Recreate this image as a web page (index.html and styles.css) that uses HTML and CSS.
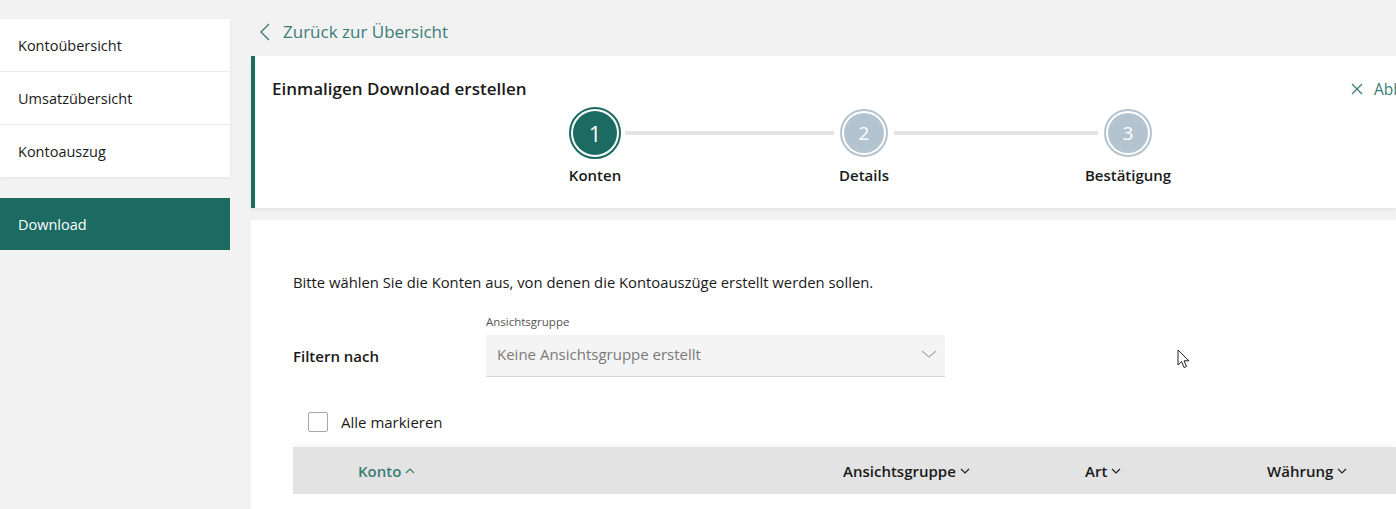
FILE: index.html
```html
<!DOCTYPE html>
<html lang="de">
<head>
    <meta charset="UTF-8">
    <meta name="viewport" content="width=device-width, initial-scale=1.0">
    <title>Download</title>
    <link rel="stylesheet" href="styles.css">
</head>
<body>

    <div class="page">
        <aside class="sidebar">
            <nav class="sidebar__menu">
                <a class="sidebar__item" href="#">Kontoübersicht</a>
                <a class="sidebar__item" href="#">Umsatzübersicht</a>
                <a class="sidebar__item" href="#">Kontoauszug</a>
            </nav>
            <a class="sidebar__active" href="#">Download</a>
        </aside>

        <main class="main">
            <a class="back" href="#">
                <svg class="back__icon" width="12" height="20" viewBox="0 0 12 20">
                    <path d="M10 2 L2 10 L10 18" fill="none" stroke="#3a7d76" stroke-width="1.4"/>
                </svg>
                Zurück zur Übersicht
            </a>

            <section class="head">
                <div class="head__top">
                    <h1 class="head__title">Einmaligen Download erstellen</h1>
                    <a class="head__cancel" href="#">
                        <svg width="12" height="12" viewBox="0 0 12 12">
                            <path d="M1 1 L11 11 M11 1 L1 11" fill="none" stroke="#3a7d76" stroke-width="1.3"/>
                        </svg>
                        Abbrechen
                    </a>
                </div>
                <div class="stepper">
                    <div class="step step--active"><span>1</span></div>
                    <div class="stepper__line"></div>
                    <div class="step"><span>2</span></div>
                    <div class="stepper__line"></div>
                    <div class="step"><span>3</span></div>
                    <p class="stepper__label">Konten</p>
                    <p></p>
                    <p class="stepper__label">Details</p>
                    <p></p>
                    <p class="stepper__label">Bestätigung</p>
                </div>
            </section>

            <section class="content">
                <p class="content__intro">Bitte wählen Sie die Konten aus, von denen die Kontoauszüge erstellt werden sollen.</p>

                <div class="filter">
                    <div class="filter__label">Filtern nach</div>
                    <div class="filter__field">
                        <label class="filter__caption">Ansichtsgruppe</label>
                        <div class="select">
                            <span>Keine Ansichtsgruppe erstellt</span>
                            <svg width="16" height="10" viewBox="0 0 16 10">
                                <path d="M1 2 L8 8 L15 2" fill="none" stroke="#a4b0bb" stroke-width="1.2"/>
                            </svg>
                        </div>
                    </div>
                </div>

                <label class="check">
                    <span class="check__box"></span>
                    Alle markieren
                </label>

                <div class="table-head">
                    <div class="table-head__cell table-head__cell--sorted">Konto
                        <svg width="10" height="6" viewBox="0 0 10 6"><path d="M1 5 L5 1 L9 5" fill="none" stroke="#3a7d76" stroke-width="1.2"/></svg>
                    </div>
                    <div class="table-head__cell">Ansichtsgruppe
                        <svg width="10" height="6" viewBox="0 0 10 6"><path d="M1 1 L5 5 L9 1" fill="none" stroke="#222" stroke-width="1.2"/></svg>
                    </div>
                    <div class="table-head__cell">Art
                        <svg width="10" height="6" viewBox="0 0 10 6"><path d="M1 1 L5 5 L9 1" fill="none" stroke="#222" stroke-width="1.2"/></svg>
                    </div>
                    <div class="table-head__cell">Währung
                        <svg width="10" height="6" viewBox="0 0 10 6"><path d="M1 1 L5 5 L9 1" fill="none" stroke="#222" stroke-width="1.2"/></svg>
                    </div>
                </div>
            </section>
        </main>
    </div>

    <svg class="cursor" width="14" height="22" viewBox="0 0 14 22">
        <path d="M1 1 L1 16 L4.5 12.5 L7 18.5 L9.5 17.5 L7 11.8 L12 11.8 Z" fill="#fff" stroke="#222" stroke-width="1" stroke-linejoin="round"/>
    </svg>

</body>
</html>
```

FILE: styles.css
```css
* {
    box-sizing: border-box;
}

body {
    margin: 0;
    background: #f2f2f2;
    font-family: "Open Sans", "Liberation Sans", sans-serif;
    color: #1a1a1a;
    overflow: hidden;
}

a {
    text-decoration: none;
}

p {
    margin: 0;
}

.page {
    display: flex;
    align-items: flex-start;
    gap: 21px;
    width: 1396px;
    height: 509px;
    overflow: hidden;
}

/* sidebar */

.sidebar {
    width: 230px;
    flex-shrink: 0;
    padding-top: 19px;
}

.sidebar__menu {
    display: flex;
    flex-direction: column;
    background: #fff;
    box-shadow: 0 1px 3px rgba(0, 0, 0, 0.06);
}

.sidebar__item {
    height: 53px;
    display: flex;
    align-items: center;
    padding-left: 18px;
    font-size: 14.5px;
    color: #1a1a1a;
    border-bottom: 1px solid #ededed;
}

.sidebar__item:last-child {
    border-bottom: none;
    height: 52px;
}

.sidebar__active {
    display: flex;
    align-items: center;
    height: 52px;
    margin-top: 21px;
    padding-left: 18px;
    background: #1c6b63;
    color: #fff;
    font-size: 14.5px;
}

/* main */

.main {
    flex: 1;
    min-width: 0;
}

.back {
    display: flex;
    align-items: center;
    gap: 12px;
    height: 56px;
    padding-left: 8px;
    padding-top: 7px;
    color: #3a7d76;
    font-size: 17px;
}

.head {
    background: #fff;
    border-left: 4px solid #1c6b63;
    height: 152px;
    box-shadow: 0 2px 3px rgba(0, 0, 0, 0.06);
}

.head__top {
    display: flex;
    justify-content: space-between;
    align-items: center;
    padding: 21px 0 0 17px;
}

.head__title {
    margin: 0;
    font-size: 17px;
    font-weight: 600;
    line-height: 24px;
}

.head__cancel {
    display: flex;
    align-items: center;
    gap: 11px;
    margin-right: -57px;
    color: #3a7d76;
    font-size: 15.5px;
    line-height: 22px;
}

.stepper {
    display: grid;
    grid-template-columns: 52px 217px 52px 212px 52px;
    grid-template-rows: 52px auto;
    align-items: center;
    justify-items: center;
    margin: 6px 0 0 314px;
    width: max-content;
}

.step {
    width: 48px;
    height: 48px;
    border-radius: 50%;
    border: 2px solid #b3c3cf;
    display: flex;
    align-items: center;
    justify-content: center;
}

.step span {
    width: 40px;
    height: 40px;
    border-radius: 50%;
    background: #b3c3cf;
    color: #fff;
    font-size: 19px;
    display: flex;
    align-items: center;
    justify-content: center;
}

.step--active {
    width: 52px;
    height: 52px;
    border-color: #1c6b63;
}

.step--active span {
    width: 44px;
    height: 44px;
    background: #1c6b63;
    font-size: 22px;
}

.stepper__line {
    height: 4px;
    width: calc(100% - 8px);
    background: #e4e4e4;
}

.stepper__label {
    white-space: nowrap;
    font-size: 15px;
    font-weight: 600;
    margin-top: 6px;
}

/* content */

.content {
    margin-top: 12px;
    background: #fff;
    padding: 53px 0 0 42px;
    height: 300px;
}

.content__intro {
    font-size: 14.8px;
    line-height: 19px;
}

.filter {
    display: flex;
    align-items: flex-end;
    margin-top: 22px;
}

.filter__label {
    width: 193px;
    flex-shrink: 0;
    font-size: 15px;
    font-weight: 600;
    line-height: 20px;
    padding-bottom: 11px;
}

.filter__caption {
    display: block;
    font-size: 11.5px;
    color: #555;
    line-height: 16px;
    margin-bottom: 5px;
}

.select {
    display: flex;
    justify-content: space-between;
    align-items: center;
    width: 459px;
    height: 42px;
    padding: 0 8px 4px 11px;
    background: #f4f4f4;
    border-bottom: 1px solid #d6d6d6;
    font-size: 15px;
    color: #7a7a7a;
}

.check {
    display: flex;
    align-items: center;
    gap: 13px;
    margin: 35px 0 0 15px;
    font-size: 15px;
    height: 20px;
}

.check__box {
    width: 20px;
    height: 20px;
    border: 1px solid #a8a8a8;
    border-radius: 2px;
    background: #fff;
}

.table-head {
    display: grid;
    grid-template-columns: 485px 242px 182px 1fr;
    align-items: center;
    height: 47px;
    margin-top: 15px;
    padding-left: 65px;
    background: #e3e3e3;
    box-shadow: 0 -4px 6px rgba(0, 0, 0, 0.03);
}

.table-head__cell {
    display: flex;
    align-items: center;
    gap: 4px;
    font-size: 15px;
    font-weight: 600;
    white-space: nowrap;
}

.table-head__cell--sorted {
    color: #3a7d76;
}

.cursor {
    position: absolute;
    left: 1177px;
    top: 349px;
}
```
